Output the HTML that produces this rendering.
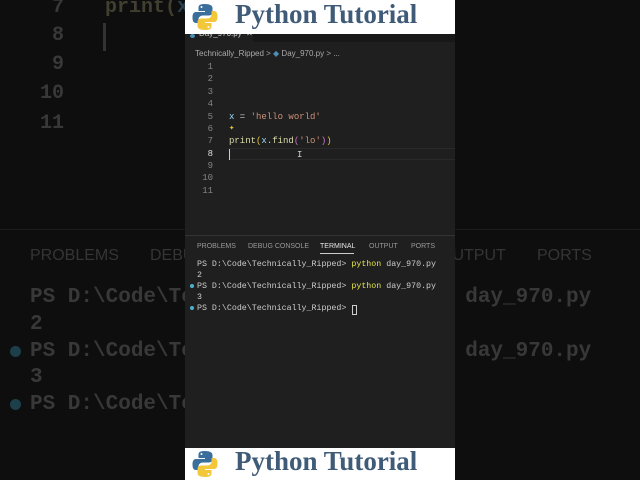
<!DOCTYPE html>
<html><head><meta charset="utf-8"><style>
*{margin:0;padding:0;box-sizing:border-box}
body{width:640px;height:480px;background:#0e0e0e;position:relative;overflow:hidden;font-family:"Liberation Mono",monospace}
.a{position:absolute;white-space:pre}
.bg{color:#383838;font-weight:bold}
.sans{font-family:"Liberation Sans",sans-serif}
.panel{position:absolute;left:185px;top:0;width:270px;height:480px;background:#1f1f1f}
.banner{position:absolute;left:0;width:270px;height:34px;background:#fff;overflow:hidden}
.banner .t{position:absolute;left:50px;top:-1px;font-family:"Liberation Serif",serif;font-weight:bold;font-size:27px;color:#3f5b78;white-space:nowrap}
.ln{position:absolute;width:28px;text-align:right;font-size:9px;color:#858585}
.code{font-size:9px;color:#ccc}
</style></head><body>
<div class="a bg" style="left:52px;top:-4px;font-size:20px">7</div>
<div class="a bg" style="left:105px;top:-4px;font-size:20px;color:#403f30">print(<span style="color:#2a4050">x</span></div>
<div style="position:absolute;left:103px;top:23px;width:3px;height:28px;background:#333"></div>
<div class="a bg" style="left:52px;top:24px;font-size:20px">8</div>
<div class="a bg" style="left:52px;top:53px;font-size:20px">9</div>
<div class="a bg" style="left:40px;top:82px;font-size:20px">10</div>
<div class="a bg" style="left:40px;top:112px;font-size:20px">11</div>
<div style="position:absolute;left:0;top:229px;width:640px;height:1px;background:#1c1c1c"></div>
<div class="a sans" style="left:30px;top:247px;font-size:16px;color:#353535">PROBLEMS</div>
<div class="a sans" style="left:150px;top:247px;font-size:16px;color:#353535">DEBU</div>
<div class="a sans" style="left:440px;top:247px;font-size:16px;color:#353535">OUTPUT</div>
<div class="a sans" style="left:537px;top:247px;font-size:16px;color:#353535">PORTS</div>
<div class="a bg" style="left:30px;top:286px;font-size:21px">PS D:\Code\Tec</div>
<div class="a bg" style="left:30px;top:313px;font-size:21px">2</div>
<div style="position:absolute;left:10px;top:346px;width:11px;height:11px;border-radius:50%;background:#1d3f4a"></div>
<div class="a bg" style="left:30px;top:340px;font-size:21px">PS D:\Code\Tec</div>
<div class="a bg" style="left:30px;top:366px;font-size:21px">3</div>
<div style="position:absolute;left:10px;top:399px;width:11px;height:11px;border-radius:50%;background:#1d3f4a"></div>
<div class="a bg" style="left:30px;top:393px;font-size:21px">PS D:\Code\Tec</div>
<div class="a bg" style="left:440px;top:286px;font-size:21px"><span style="color:#40402a">n</span> day_970.py</div>
<div class="a bg" style="left:440px;top:340px;font-size:21px"><span style="color:#40402a">n</span> day_970.py</div>

<div class="panel">
  <div style="position:absolute;left:0;top:34px;width:270px;height:8px;background:#181818"></div>
  <div style="position:absolute;left:0;top:34px;width:68px;height:8px;background:#1f1f1f"></div>
  <div class="a sans" style="left:14px;top:29px;font-size:8px;color:#ccc">Day_970.py &nbsp;✕</div>
  <div style="position:absolute;left:5px;top:34px;width:5px;height:4px;border-radius:50%;background:#4b8fb5"></div>
  <div class="banner" style="top:0">
    <svg style="position:absolute;left:7px;top:3px" width="26" height="28" viewBox="0 0 26 28">
      <path d="M12.5 1C7 1 6.5 3 6.5 5v3h6.5v1H4C1.5 9 0.5 11 0.5 14.5S1.5 20 4 20h2.5v-3.5c0-2.5 2-4 4.5-4h6c2 0 3.5-1.5 3.5-3.5V5c0-2.5-2.5-4-8-4z" fill="#3a6e9c"/>
      <circle cx="9.5" cy="4" r="1" fill="#fff"/>
      <path d="M13.5 27c5.5 0 6-2 6-4v-3H13v-1h9c2.5 0 3.5-2 3.5-5.5S24.5 8 22 8h-2.5v3.5c0 2.5-2 4-4.5 4H9c-2 0-3.5 1.5-3.5 3.5V23c0 2.5 2.5 4 8 4z" fill="#f3c73a"/>
      <circle cx="16.5" cy="24" r="1" fill="#fff"/>
    </svg>
    <div class="t">Python Tutorial</div>
  </div>
  <div class="a sans" style="left:10px;top:49px;font-size:8px;color:#aaa">Technically_Ripped &gt; <span style="color:#4b8fb5">◆</span> Day_970.py &gt; ...</div>
  <div class="ln" style="left:0;top:62px">1</div>
  <div class="ln" style="left:0;top:74px">2</div>
  <div class="ln" style="left:0;top:87px">3</div>
  <div class="ln" style="left:0;top:99px">4</div>
  <div class="ln" style="left:0;top:112px">5</div>
  <div class="ln" style="left:0;top:124px">6</div>
  <div class="ln" style="left:0;top:136px">7</div>
  <div class="ln" style="left:0;top:149px;color:#ddd">8</div>
  <div class="ln" style="left:0;top:161px">9</div>
  <div class="ln" style="left:0;top:173px">10</div>
  <div class="ln" style="left:0;top:186px">11</div>
  <div class="a code" style="left:44px;top:112px"><span style="color:#9cdcfe">x</span> = <span style="color:#ce9178">'hello world'</span></div>
  <div class="a code" style="left:44px;top:123px;color:#e8c23a">✦</div>
  <div class="a code" style="left:44px;top:136px"><span style="color:#dcdcaa">print</span><span style="color:#e8c23a">(</span><span style="color:#9cdcfe">x</span>.<span style="color:#dcdcaa">find</span><span style="color:#d070d0">(</span><span style="color:#ce9178">'lo'</span><span style="color:#d070d0">)</span><span style="color:#e8c23a">)</span></div>
  <div style="position:absolute;left:43px;top:148px;width:227px;height:12px;border-top:1px solid #2a2a2a;border-bottom:1px solid #2a2a2a"></div>
  <div style="position:absolute;left:44px;top:149px;width:1px;height:11px;background:#ccc"></div>
  <div class="a code" style="left:112px;top:150px;color:#ccc;font-size:9px">I</div>
  <div style="position:absolute;left:0;top:235px;width:270px;height:1px;background:#333"></div>
  <div class="a sans" style="left:12px;top:243px;font-size:7px;color:#999">PROBLEMS</div>
  <div class="a sans" style="left:63px;top:243px;font-size:7px;color:#999">DEBUG CONSOLE</div>
  <div class="a sans" style="left:135px;top:243px;font-size:7px;color:#e7e7e7">TERMINAL</div>
  <div style="position:absolute;left:135px;top:253px;width:34px;height:1px;background:#ccc"></div>
  <div class="a sans" style="left:184px;top:243px;font-size:7px;color:#999">OUTPUT</div>
  <div class="a sans" style="left:226px;top:243px;font-size:7px;color:#999">PORTS</div>
  <div class="a code" style="left:12px;top:260px;font-size:8.3px">PS D:\Code\Technically_Ripped&gt; <span style="color:#e5e54a">python</span> day_970.py</div>
  <div class="a code" style="left:12px;top:271px;font-size:8.3px">2</div>
  <div style="position:absolute;left:5px;top:284px;width:4px;height:4px;border-radius:50%;background:#4bb0d0"></div>
  <div class="a code" style="left:12px;top:282px;font-size:8.3px">PS D:\Code\Technically_Ripped&gt; <span style="color:#e5e54a">python</span> day_970.py</div>
  <div class="a code" style="left:12px;top:293px;font-size:8.3px">3</div>
  <div style="position:absolute;left:5px;top:306px;width:4px;height:4px;border-radius:50%;background:#4bb0d0"></div>
  <div class="a code" style="left:12px;top:304px;font-size:8.3px">PS D:\Code\Technically_Ripped&gt;</div>
  <div style="position:absolute;left:167px;top:305px;width:5px;height:10px;border:1px solid #ccc"></div>
  <div class="banner" style="top:448px;height:32px">
    <svg style="position:absolute;left:7px;top:2px" width="26" height="28" viewBox="0 0 26 28">
      <path d="M12.5 1C7 1 6.5 3 6.5 5v3h6.5v1H4C1.5 9 0.5 11 0.5 14.5S1.5 20 4 20h2.5v-3.5c0-2.5 2-4 4.5-4h6c2 0 3.5-1.5 3.5-3.5V5c0-2.5-2.5-4-8-4z" fill="#3a6e9c"/>
      <circle cx="9.5" cy="4" r="1" fill="#fff"/>
      <path d="M13.5 27c5.5 0 6-2 6-4v-3H13v-1h9c2.5 0 3.5-2 3.5-5.5S24.5 8 22 8h-2.5v3.5c0 2.5-2 4-4.5 4H9c-2 0-3.5 1.5-3.5 3.5V23c0 2.5 2.5 4 8 4z" fill="#f3c73a"/>
      <circle cx="16.5" cy="24" r="1" fill="#fff"/>
    </svg>
    <div class="t" style="top:-2px">Python Tutorial</div>
  </div>
</div>
</body></html>
